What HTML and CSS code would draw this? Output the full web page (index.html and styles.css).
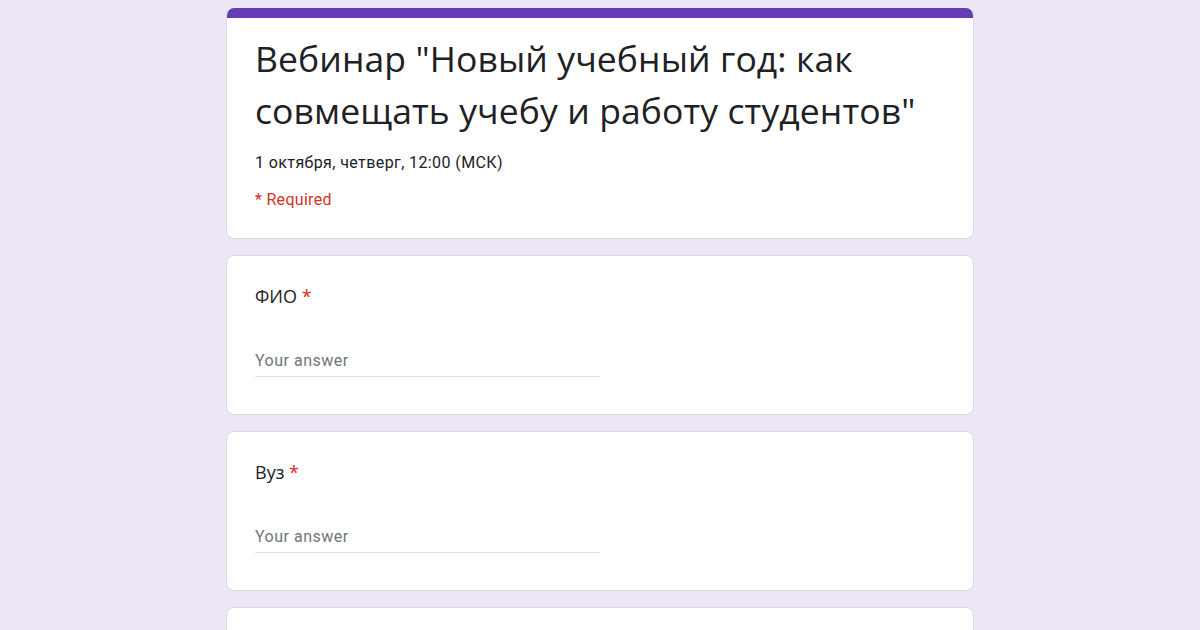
FILE: index.html
```html
<!DOCTYPE html>
<html lang="ru">
<head>
<meta charset="utf-8">
<title>Вебинар</title>
<link rel="stylesheet" href="styles.css">
</head>
<body>
<main class="form">
  <section class="card header-card">
    <div class="accent"></div>
    <div class="header-body">
      <h1 class="title">Вебинар "Новый учебный год: как совмещать учебу и работу студентов"</h1>
      <p class="desc">1 октября, четверг, 12:00 (МСК)</p>
      <p class="required">* Required</p>
    </div>
  </section>
  <section class="card question">
    <div class="label">ФИО <span class="star">*</span></div>
    <div class="answer">Your answer</div>
  </section>
  <section class="card question">
    <div class="label">Вуз <span class="star">*</span></div>
    <div class="answer">Your answer</div>
  </section>
  <section class="card question"></section>
</main>
</body>
</html>
```
FILE: styles.css
```css
html, body {
  margin: 0;
  padding: 0;
  background: #ede7f6;
  height: 630px;
  overflow: hidden;
}
.form {
  width: 748px;
  margin: 8px auto 0;
  display: flex;
  flex-direction: column;
  gap: 16px;
}
.card {
  background: #fff;
  border: 1px solid #dadce0;
  border-radius: 8px;
  box-sizing: border-box;
}
.header-card {
  height: 231px;
  overflow: hidden;
  border-top: none;
}
.accent {
  height: 10px;
  background: #673ab7;
}
.header-body {
  padding: 14px 28px 0 28px;
}
.title {
  margin: 0;
  font-family: "Open Sans", "Noto Sans", sans-serif;
  font-weight: 400;
  font-size: 35.5px;
  line-height: 52px;
  letter-spacing: 0.1px;
  color: #202124;
}
.desc {
  margin: 17px 0 0;
  font-family: Roboto, "Liberation Sans", sans-serif;
  font-size: 16px;
  line-height: 20px;
  letter-spacing: 0.4px;
  color: #202124;
}
.required {
  margin: 17px 0 0;
  font-family: Roboto, "Liberation Sans", sans-serif;
  font-size: 16px;
  line-height: 20px;
  letter-spacing: 0.3px;
  color: #d93025;
}
.question {
  height: 160px;
  padding: 28px 28px 0;
}
.label {
  font-family: "Open Sans", "Noto Sans", sans-serif;
  font-size: 18px;
  line-height: 24px;
  color: #202124;
}
.star {
  color: #d93025;
}
.answer {
  margin-top: 43px;
  width: 345px;
  padding-bottom: 5px;
  border-bottom: 1px solid #e0e0e0;
  font-family: Roboto, "Liberation Sans", sans-serif;
  font-size: 16px;
  line-height: 20px;
  letter-spacing: 0.5px;
  color: #70757a;
}
```
